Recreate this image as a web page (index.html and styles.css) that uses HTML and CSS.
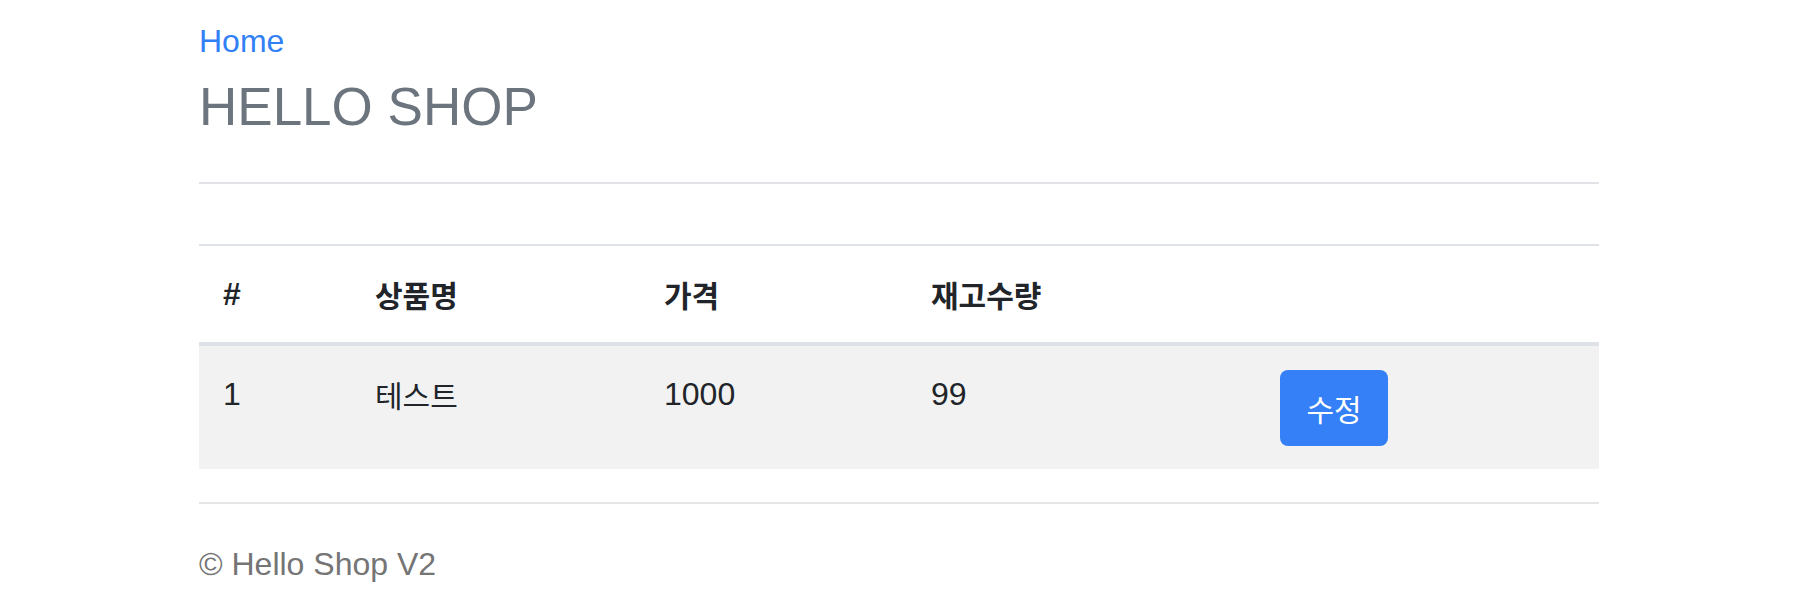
FILE: index.html
```html
<!DOCTYPE html>
<html lang="ko">
<head>
<meta charset="utf-8">
<title>HELLO SHOP</title>
<link rel="stylesheet" href="styles.css">
</head>
<body>
<div class="container">
  <header class="header">
    <a class="home" href="#">Home</a>
    <h3 class="brand">HELLO SHOP</h3>
  </header>
  <main class="content">
    <table class="table">
      <thead>
        <tr>
          <th class="c1">#</th>
          <th class="c2 ko">상품명</th>
          <th class="c3 ko">가격</th>
          <th class="c4 ko">재고수량</th>
          <th class="c5"></th>
        </tr>
      </thead>
      <tbody>
        <tr>
          <td>1</td>
          <td class="ko">테스트</td>
          <td>1000</td>
          <td>99</td>
          <td><a class="btn ko" href="#">수정</a></td>
        </tr>
      </tbody>
    </table>
  </main>
  <footer class="footer">
    <span>© Hello Shop V2</span>
  </footer>
</div>
</body>
</html>
```
FILE: styles.css
```css
html, body {
  margin: 0;
  background: #ffffff;
}
body {
  padding-right: 6px;
  font-family: "Liberation Sans", "Noto Sans CJK KR", sans-serif;
  font-size: 32px;
  line-height: 48px;
  color: #212529;
}
.container {
  width: 1400px;
  margin: 0 auto;
}
.header {
  padding-top: 17px;
  padding-bottom: 43px;
  border-bottom: 2px solid #e2e3e6;
}
.home {
  display: block;
  color: #3280f6;
  text-decoration: none;
  width: max-content;
}
.brand {
  margin: 10px 0 0;
  font-size: 53px;
  line-height: 64px;
  font-weight: 400;
  color: #6c757d;
}
.content {
  padding-top: 60px;
}
.table {
  width: 1400px;
  border-collapse: separate;
  border-spacing: 0;
  table-layout: fixed;
}
.table th {
  text-align: left;
  font-weight: 700;
  padding: 24px;
  border-top: 2px solid #dee2e6;
  border-bottom: 4px solid #dee2e6;
  vertical-align: bottom;
}
.table td {
  padding: 24px 24px 23px;
  background: #f2f2f2;
  vertical-align: top;
}
.ko {
  font-family: "Noto Sans CJK KR", sans-serif;
  font-size: 30px;
}
.c1 { width: 104px; }
.c2 { width: 241px; }
.c3 { width: 219px; }
.c4 { width: 301px; }
.c5 { width: 295px; }
.btn {
  display: flex;
  align-items: center;
  justify-content: center;
  width: 108px;
  height: 76px;
  box-sizing: border-box;
  border-radius: 8px;
  background: #3580f6;
  color: #ffffff;
  text-decoration: none;
}
.footer {
  margin-top: 33px;
  padding-top: 36px;
  border-top: 2px solid #e5e5e5;
  color: #757575;
}
```
